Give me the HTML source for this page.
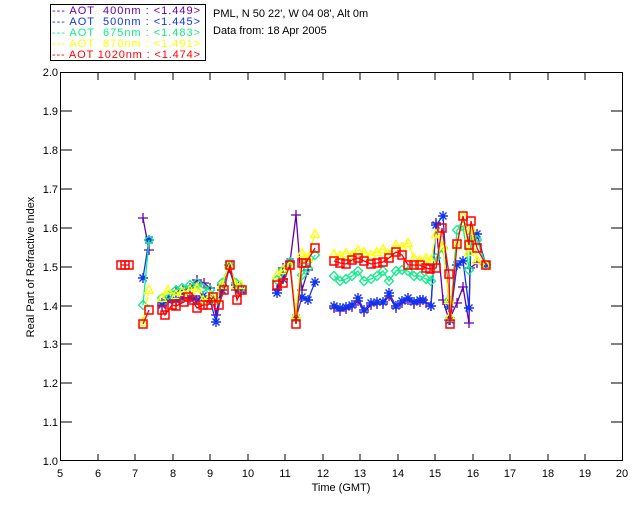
<!DOCTYPE html>
<html><head><style>
html,body{margin:0;padding:0;background:#fff}
svg{display:block}
text{font-family:"Liberation Sans",sans-serif;font-size:11px}
</style></head><body>
<svg width="640" height="512" viewBox="0 0 640 512" xmlns="http://www.w3.org/2000/svg">
<defs>
<marker id="sq" markerUnits="userSpaceOnUse" markerWidth="12" markerHeight="12" refX="6" refY="6"><rect x="2" y="2" width="8" height="8" fill="none" stroke="#f00" stroke-width="1.5"/></marker>
<marker id="tr" markerUnits="userSpaceOnUse" markerWidth="12" markerHeight="12" refX="6" refY="6"><path d="M6 1.5 L10.5 9.5 L1.5 9.5Z" fill="none" stroke="#ff0" stroke-width="1.3"/></marker>
<marker id="di" markerUnits="userSpaceOnUse" markerWidth="12" markerHeight="12" refX="6" refY="6"><path d="M6 1.5 L10.5 6 L6 10.5 L1.5 6Z" fill="none" stroke="#1e8" stroke-width="1.3"/></marker>
<marker id="as" markerUnits="userSpaceOnUse" markerWidth="12" markerHeight="12" refX="6" refY="6"><path d="M1 6H11M6 1V11M2.5 2.5L9.5 9.5M9.5 2.5L2.5 9.5" stroke="#13e" stroke-width="1.4"/></marker>
<marker id="pl" markerUnits="userSpaceOnUse" markerWidth="12" markerHeight="12" refX="6" refY="6"><path d="M1 6H11M6 1V11" stroke="#60a" stroke-width="1.3"/></marker>
</defs>
<!-- legend -->
<rect x="50.5" y="4.5" width="155" height="56" fill="#fff" stroke="#000"/>
<g font-size="11">
<text x="52" y="14" fill="#60a" textLength="148" lengthAdjust="spacing">--- AOT&#160;&#160;400nm : &lt;1.449&gt;</text>
<text x="52" y="25" fill="#13e" textLength="148" lengthAdjust="spacing">--- AOT&#160;&#160;500nm : &lt;1.445&gt;</text>
<text x="52" y="36" fill="#1e8" textLength="148" lengthAdjust="spacing">--- AOT&#160;&#160;675nm : &lt;1.483&gt;</text>
<text x="52" y="47" fill="#ff0" textLength="148" lengthAdjust="spacing">--- AOT&#160;&#160;870nm : &lt;1.491&gt;</text>
<text x="52" y="58" fill="#f00" textLength="148" lengthAdjust="spacing">--- AOT 1020nm : &lt;1.474&gt;</text>
</g>
<text x="213" y="17" fill="#000">PML, N 50 22', W 04 08', Alt 0m</text>
<text x="213" y="34" fill="#000">Data from: 18 Apr 2005</text>
<!-- axes -->
<rect x="60.5" y="72.5" width="562" height="388" fill="none" stroke="#000"/>
<g stroke="#000">
<path d="M98 461v-7M135 461v-7M173 461v-7M210 461v-7M248 461v-7M285 461v-7M323 461v-7M360 461v-7M398 461v-7M435 461v-7M473 461v-7M510 461v-7M548 461v-7M585 461v-7"/>
<path d="M98 73v7M135 73v7M173 73v7M210 73v7M248 73v7M285 73v7M323 73v7M360 73v7M398 73v7M435 73v7M473 73v7M510 73v7M548 73v7M585 73v7"/>
<path d="M61 422h11M61 383h11M61 344h11M61 306h11M61 267h11M61 228h11M61 189h11M61 150h11M61 111h11"/>
<path d="M622 422h-11M622 383h-11M622 344h-11M622 306h-11M622 267h-11M622 228h-11M622 189h-11M622 150h-11M622 111h-11"/>
</g>
<g fill="#000" text-anchor="middle">
<text x="60" y="477">5</text><text x="98" y="477">6</text><text x="135" y="477">7</text><text x="173" y="477">8</text><text x="210" y="477">9</text><text x="248" y="477">10</text><text x="285" y="477">11</text><text x="323" y="477">12</text><text x="360" y="477">13</text><text x="398" y="477">14</text><text x="435" y="477">15</text><text x="473" y="477">16</text><text x="510" y="477">17</text><text x="548" y="477">18</text><text x="585" y="477">19</text><text x="622" y="477">20</text>
<text x="341" y="491">Time (GMT)</text>
</g>
<g fill="#000" text-anchor="end">
<text x="58" y="465">1.0</text><text x="58" y="426">1.1</text><text x="58" y="387">1.2</text><text x="58" y="348">1.3</text><text x="58" y="310">1.4</text><text x="58" y="271">1.5</text><text x="58" y="232">1.6</text><text x="58" y="193">1.7</text><text x="58" y="154">1.8</text><text x="58" y="115">1.9</text><text x="58" y="76">2.0</text>
</g>
<text transform="translate(34 267) rotate(-90)" text-anchor="middle" fill="#000">Real Part of Refractive Index</text>
<!-- data -->
<g fill="none" stroke-width="1.3">
<g stroke="#60a" marker-start="url(#pl)" marker-mid="url(#pl)" marker-end="url(#pl)">
<polyline points="143,218 149,250"/>
<polyline points="162,303 169,298 176,292 183,290 190,288 197,280 204,283 210,288 216,315 222,285 229,268 236,290 241,292"/>
<polyline points="277,290 283,268 290,262 296,215 302,290 308,270"/>
<polyline points="334,308 340,311 346,309 352,307 358,301 364,312 371,305 377,304 383,304 389,296 396,308 402,303 408,300 414,304 420,302 426,303 431,306 436,223 443,300 449,320 457,303 463,287 469,323 470,268 477,263 486,265"/>
</g>
<g stroke="#13e" marker-start="url(#as)" marker-mid="url(#as)" marker-end="url(#as)">
<polyline points="143,278 149,240"/>
<polyline points="162,305 168,300 176,300 182,298 190,298 197,300 203,296 210,300 216,322 222,290 229,265 236,285 241,290"/>
<polyline points="277,293 283,279 290,262 296,318 302,297 308,300 315,282"/>
<polyline points="334,306 340,308 346,307 352,305 358,298 364,310 371,303 377,302 383,302 389,293 396,306 402,301 408,298 414,302 420,300 423,300 431,306 436,225 443,216 449,307 450,320 457,265 463,261 469,308 471,240 477,234 486,265"/>
</g>
<g stroke="#1e8" marker-start="url(#di)" marker-mid="url(#di)" marker-end="url(#di)">
<polyline points="143,305 149,240"/>
<polyline points="162,298 168,295 176,290 182,288 190,285 197,283 203,288 210,290 216,300 222,283 229,265 236,283 241,288"/>
<polyline points="277,280 283,270 290,262 296,318 302,275 308,268 315,255"/>
<polyline points="334,276 340,281 346,279 352,276 358,271 364,281 371,279 377,276 383,271 389,281 396,271 402,270 408,271 414,276 420,276 426,279 431,281 436,258 443,248 449,300 450,318 457,230 463,226 469,270 471,236 477,240 486,265"/>
</g>
<g stroke="#ff0" marker-start="url(#tr)" marker-mid="url(#tr)" marker-end="url(#tr)">
<polyline points="143,322 149,290"/>
<polyline points="162,298 168,290 176,295 182,292 190,290 197,288 203,300 210,296 216,300 222,285 229,265 236,285 241,285"/>
<polyline points="277,275 283,270 290,265 296,315 302,253 308,258 315,234"/>
<polyline points="334,254 340,256 346,253 352,255 358,250 364,252 371,255 377,252 383,249 389,254 396,245 402,247 408,243 414,258 420,260 426,258 431,260 436,234 443,246 449,300 450,316 457,245 463,216 469,252 471,228 477,260 486,265"/>
</g>
<g stroke="#f00" marker-start="url(#sq)" marker-mid="url(#sq)" marker-end="url(#sq)">
<polyline points="121,265 125,265 129,265"/>
<polyline points="143,324 149,310"/>
<polyline points="162,310 165,315 172,305 176,306 184,302 188,297 192,300 197,308 203,305 208,305 213,297 219,305 224,290 230,265 237,300 242,290"/>
<polyline points="277,285 283,283 290,265 296,324 302,263 306,263 315,248"/>
<polyline points="334,261 340,263 346,264 352,260 358,258 364,261 371,264 377,263 383,262 389,258 396,252 402,255 408,265 414,265 420,265 426,268 430,269 436,268 442,228 449,274 450,324 457,244 463,216 469,245 471,221 477,248 486,265"/>
</g>
</g>
</svg>
</body></html>
